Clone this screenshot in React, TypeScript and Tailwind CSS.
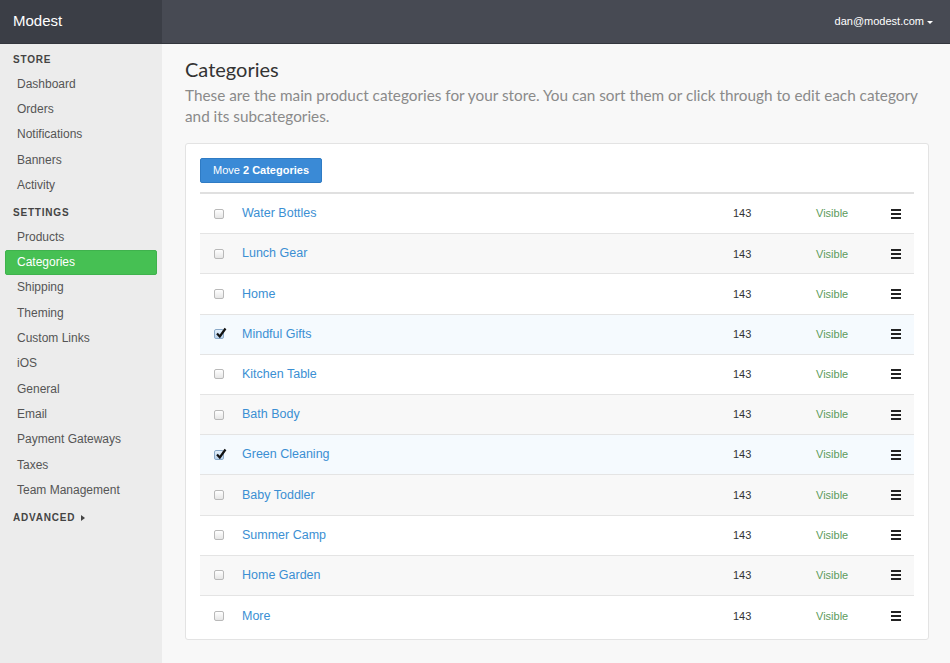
const store = ["Dashboard", "Orders", "Notifications", "Banners", "Activity"];
const settings = [
  "Products",
  "Categories",
  "Shipping",
  "Theming",
  "Custom Links",
  "iOS",
  "General",
  "Email",
  "Payment Gateways",
  "Taxes",
  "Team Management",
];

const rows = [
  { name: "Water Bottles", checked: false },
  { name: "Lunch Gear", checked: false },
  { name: "Home", checked: false },
  { name: "Mindful Gifts", checked: true },
  { name: "Kitchen Table", checked: false },
  { name: "Bath Body", checked: false },
  { name: "Green Cleaning", checked: true },
  { name: "Baby Toddler", checked: false },
  { name: "Summer Camp", checked: false },
  { name: "Home Garden", checked: false },
  { name: "More", checked: false },
];

function Check({ on }: { on: boolean }) {
  return (
    <span
      className={`relative flex h-[10px] w-[10px] items-center justify-center rounded-[2px] border bg-gradient-to-b ${
        on ? "border-[#8aa9c8] from-[#e4f0fb] to-[#b9d3ee]" : "border-[#b9b9b9] from-white to-[#e6e6e6]"
      }`}
    >
      {on && (
        <svg viewBox="0 0 12 12" className="absolute -top-[3px] left-[0px] h-[12px] w-[12px]">
          <path d="M2 6.5 L4.8 9.5 L10.5 1.5" fill="none" stroke="#111" strokeWidth="2.2" />
        </svg>
      )}
    </span>
  );
}

function Burger() {
  return (
    <span className="flex w-[10px] flex-col gap-[2px]">
      <span className="h-[2px] bg-[#222]" />
      <span className="h-[2px] bg-[#222]" />
      <span className="h-[2px] bg-[#222]" />
    </span>
  );
}

export default function App() {
  return (
    <div className="flex h-[663px] w-[950px] flex-col overflow-hidden font-['Liberation_Sans',Arial,sans-serif]">
      {/* top bar */}
      <header className="flex h-[44px] shrink-0 border-b border-[#33363d]">
        <div className="flex w-[162px] items-center bg-[#3b3e46] pl-[13px] text-[15px] text-white">
          Modest
        </div>
        <div className="flex flex-1 items-center justify-end bg-[#474a53] pr-[17px] text-[11px] text-white">
          dan@modest.com
          <span className="ml-[3px] mt-[1px] border-x-[3px] border-t-[3px] border-x-transparent border-t-white" />
        </div>
      </header>

      <div className="flex flex-1">
        {/* sidebar */}
        <aside className="w-[162px] shrink-0 bg-[#ececec] pt-[8px]">
          <div className="pl-[13px] text-[10px] font-bold tracking-[0.08em] text-[#444]">STORE</div>
          <nav className="mt-[4px] px-[5px]">
            {store.map((s) => (
              <div key={s} className="flex h-[25.3px] items-center pl-[12px] text-[12px] text-[#555]">
                {s}
              </div>
            ))}
          </nav>
          <div className="mt-[8px] pl-[13px] text-[10px] font-bold tracking-[0.08em] text-[#444]">SETTINGS</div>
          <nav className="mt-[4px] px-[5px]">
            {settings.map((s) =>
              s === "Categories" ? (
                <div
                  key={s}
                  className="flex h-[25px] items-center rounded-[2px] border border-[#3fb24d] bg-[#46c053] pl-[11px] text-[12px] text-white"
                >
                  {s}
                </div>
              ) : (
                <div key={s} className="flex h-[25.3px] items-center pl-[12px] text-[12px] text-[#555]">
                  {s}
                </div>
              )
            )}
          </nav>
          <div className="mt-[8px] flex items-center pl-[13px] text-[10px] font-bold tracking-[0.08em] text-[#444]">
            ADVANCED
            <span className="ml-[6px] border-y-[3.5px] border-l-[4px] border-y-transparent border-l-[#444]" />
          </div>
        </aside>

        {/* main */}
        <main className="flex-1 bg-[#f8f8f8] pl-[23px] pr-[21px] pt-[13px]">
          <h1 className="font-['Lato',sans-serif] text-[20px] leading-[24px] text-[#333]">Categories</h1>
          <p className="mt-[4px] font-['Lato',sans-serif] text-[15.3px] leading-[21px] text-[#8a8a8a]">
            These are the main product categories for your store. You can sort them or click through to edit each
            category and its subcategories.
          </p>

          <section className="mt-[16px] rounded-[3px] border border-[#e3e3e3] bg-white px-[14px] pb-[3px] pt-[14px]">
            <button className="flex h-[25px] items-center rounded-[2px] border border-[#2f7bc4] bg-[#3a8ad6] px-[12px] text-[11px] text-white">
              Move&nbsp;<b>2 Categories</b>
            </button>
            <div className="mt-[9px] border-t-2 border-[#e0e0e0]">
              {rows.map((r, i) => (
                <div
                  key={r.name}
                  className={`flex h-[40.2px] items-center border-b border-[#e4e4e4] last:border-b-0 ${
                    r.checked ? "bg-[#f5fafe]" : i % 2 === 1 ? "bg-[#f8f8f8]" : "bg-white"
                  }`}
                >
                  <div className="flex w-[42px] pl-[14px]">
                    <Check on={r.checked} />
                  </div>
                  <div className="flex-1 text-[12.5px] text-[#3b8fd3]">{r.name}</div>
                  <div className="w-[83px] text-[11px] text-[#333]">143</div>
                  <div className="w-[75px] text-[11px] text-[#5c9b5c]">Visible</div>
                  <div className="flex w-[23px] justify-start">
                    <Burger />
                  </div>
                </div>
              ))}
            </div>
          </section>
        </main>
      </div>
    </div>
  );
}
